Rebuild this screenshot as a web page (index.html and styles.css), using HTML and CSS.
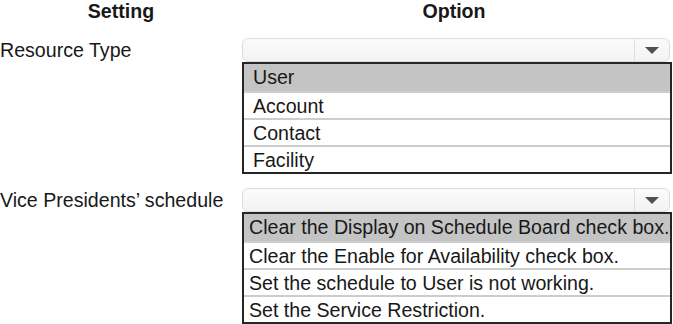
FILE: index.html
```html
<!DOCTYPE html>
<html>
<head>
<meta charset="utf-8">
<link rel="stylesheet" href="styles.css">
</head>
<body>
<div class="table">
  <div class="head">
    <div class="head-cell head-setting">Setting</div>
    <div class="head-cell head-option">Option</div>
  </div>
  <div class="row">
    <div class="label">Resource Type</div>
    <div class="field">
      <div class="select"><span class="select-btn"><span class="arrow"></span></span></div>
      <ul class="list list-wide">
        <li class="item item-sel">User</li>
        <li class="item">Account</li>
        <li class="item">Contact</li>
        <li class="item">Facility</li>
      </ul>
    </div>
  </div>
  <div class="row row-second">
    <div class="label">Vice Presidents’ schedule</div>
    <div class="field">
      <div class="select"><span class="select-btn"><span class="arrow"></span></span></div>
      <ul class="list list-narrow">
        <li class="item item-sel">Clear the Display on Schedule Board check box.</li>
        <li class="item">Clear the Enable for Availability check box.</li>
        <li class="item">Set the schedule to User is not working.</li>
        <li class="item">Set the Service Restriction.</li>
      </ul>
    </div>
  </div>
</div>
</body>
</html>
```
FILE: styles.css
```css
html, body {
  margin: 0;
  padding: 0;
  background: #ffffff;
}
body {
  font-family: "Liberation Sans", Arial, sans-serif;
  font-size: 19.6px;
  color: #181818;
}
.table {
  width: 673px;
}
.head {
  display: flex;
  height: 22px;
  line-height: 22px;
  font-weight: bold;
  margin-bottom: 16px;
}
.head-cell {
  text-align: center;
}
.head-setting {
  width: 242px;
}
.head-option {
  width: 424px;
}
.row {
  display: flex;
}
.row-second {
  margin-top: 14px;
}
.label {
  width: 242px;
  flex: none;
  line-height: 24px;
  white-space: nowrap;
}
.field {
  width: 430px;
  flex: none;
}
.select {
  box-sizing: border-box;
  width: 428px;
  height: 24px;
  border: 1px solid #dcdcdc;
  border-radius: 6px;
  background: linear-gradient(#fbfbfb, #f3f3f3);
  display: flex;
  justify-content: flex-end;
}
.select-btn {
  width: 34px;
  border-left: 1px solid #dedede;
  display: flex;
  align-items: center;
  justify-content: center;
}
.arrow {
  width: 0;
  height: 0;
  border-left: 7px solid transparent;
  border-right: 7px solid transparent;
  border-top: 7px solid #505050;
}
.list {
  list-style: none;
  margin: 0;
  padding: 0;
  width: 430px;
  box-sizing: border-box;
  border: 2px solid #262626;
}
.item {
  box-sizing: border-box;
  height: 27px;
  line-height: 26px;
  white-space: nowrap;
  border-top: 2px solid #cdcdcd;
}
.item-sel {
  background: #c4c4c4;
  border-top: none;
  line-height: 27px;
}
.list-wide .item {
  padding-left: 9px;
}
.list-narrow .item {
  padding-left: 5px;
}
```
